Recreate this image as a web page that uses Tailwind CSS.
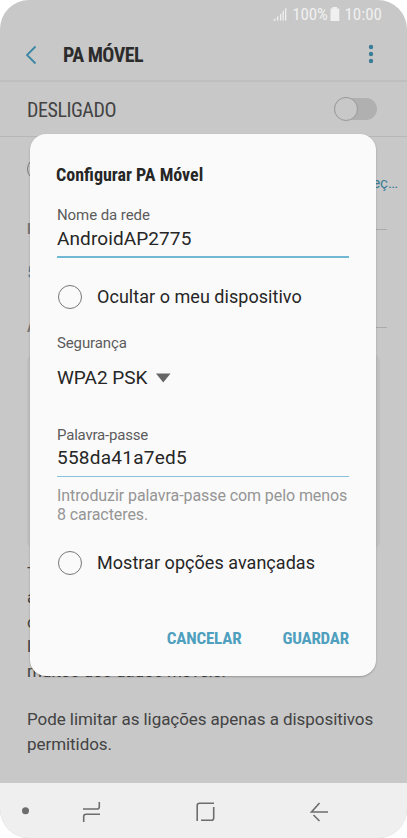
<!DOCTYPE html>
<html lang="pt">
<head>
    <meta charset="UTF-8">
    <meta name="viewport" content="width=device-width, initial-scale=1.0">
    <title>PA Móvel</title>
    <script src="https://cdn.jsdelivr.net/npm/@tailwindcss/browser@4"></script>
</head>
<body class="bg-white font-['Roboto',sans-serif]">
    <div class="relative flex flex-col w-[407px] h-[838px] overflow-hidden rounded-[29px] bg-[#c8c8c8] text-[#434343]">

        <!-- Status bar -->
        <div class="flex items-center justify-end h-7 pr-[25px] text-[#f0f0f0] text-[17px] leading-7 font-['Roboto_Condensed','Roboto',sans-serif] [font-stretch:75%]">
            <svg class="w-[15px] h-[14px] mr-[5px]" viewBox="0 0 15 14" fill="#f0f0f0">
                <path d="M1 13.500L3.500 11V13.500ZM5 10L6.300 8.800V13.500H5ZM8 7.500L9.300 6.200V13.500H8ZM10.500 4.500L11.800 3.200V13.500H10.500ZM13 2L14.300 .7V13.500H13Z"/>
            </svg>
            <span class="tracking-[-0.2px]">100%</span>
            <svg class="w-[10px] h-[14px] ml-[3px] mr-1" viewBox="0 0 10 14" fill="#f0f0f0">
                <path d="M2.500 0H7V1.500H9.300V14H.5V1.500H2.500Z"/>
            </svg>
            <span>10:00</span>
        </div>

        <!-- App bar -->
        <header class="flex items-center h-[54px] pl-6 pr-[31px] border-b-2 border-[#bfbfbf]">
            <svg class="w-[14px] h-5 mt-px" viewBox="0 0 14 20" fill="none" stroke="#3b87a3" stroke-width="1.8">
                <path d="M11.500 1.500L3 10L11.500 18.500"/>
            </svg>
            <h1 class="mt-[2px] ml-[25px] text-[20px] tracking-[-0.5px] font-bold text-[#2c2c2c] font-['Roboto_Condensed','Roboto',sans-serif] [font-stretch:75%]">PA MÓVEL</h1>
            <svg class="w-[10px] h-5 ml-auto" viewBox="0 0 10 20" fill="#3b7d96">
                <circle cx="5" cy="3" r="2.200"/><circle cx="5" cy="10" r="2.200"/><circle cx="5" cy="17" r="2.200"/>
            </svg>
        </header>
        <div class="flex items-center justify-between h-[55px] pl-[27px] pr-[30px] border-b border-[#b7b7b7]">
            <span class="mt-px text-[20px] tracking-[-0.45px] font-['Roboto_Condensed','Roboto',sans-serif] [font-stretch:75%]">DESLIGADO</span>
            <div class="flex items-center w-[43px] h-[22px] rounded-full bg-[#b0b0b0]">
                <div class="size-6 rounded-full border border-[#999] bg-[#c8c8c8]"></div>
            </div>
        </div>

        <!-- Page content -->
        <main class="flex-1 pl-[27px]">
            <div class="flex justify-between h-[91px] pt-5 pr-[9px]">
                <div class="size-6 rounded-full border border-[#777]"></div>
                <span class="pt-4 text-[15px] leading-5 text-[#3b7d96]">Adicionar endereç…</span>
            </div>
            <div class="flex items-center h-[2px] pr-5 text-sm font-bold text-[#777]"><span>Rede</span><i class="flex-1 ml-2 h-px bg-[#aaa]"></i></div>
            <div class="h-[96px] pt-[32px] text-[17px] leading-5 text-[#3b7d96]">5 GHz</div>
            <div class="flex items-center h-[2px] pr-5 text-sm font-bold text-[#777]"><span>Ajuda</span><i class="flex-1 ml-2 h-px bg-[#aaa]"></i></div>
            <div class="w-[353px] h-[195px] mt-[26px] rounded-lg bg-[#c0c0c0]"></div>
            <div class="pt-[11.5px] text-[17px] leading-[24.5px]">
                <p>Tocar para<br>ativar o PA<br>com outros<br>ligados<br>muitos dos dados móveis.</p>
                <p class="pt-[24px] tracking-[-0.06px]">Pode limitar as ligações apenas a dispositivos<br>permitidos.</p>
            </div>
        </main>

        <!-- Navigation bar -->
        <nav class="shrink-0 h-[55px] bg-[#efefef]">
            <svg class="w-full h-full" viewBox="0 0 407 55" fill="none" stroke="#6d6d6d" stroke-width="1.600">
                <circle cx="25.500" cy="27.700" r="3.500" fill="#6d6d6d" stroke="none"/>
                <path d="M83 26H97Q99.300 26 99.300 23.700V19M100 31.200H86Q83.700 31.200 83.700 33.500V39"/>
                <path d="M197.200 38V22.500Q197.200 20.200 199.500 20.200H214M213.700 24V35Q213.700 37.300 211.400 37.300H201"/>
                <path d="M328 29H311.500L319.500 20M313.500 32L319.500 38"/>
            </svg>
        </nav>

        <!-- Dialog -->
        <div class="absolute left-[30px] top-[134px] flex flex-col w-[346px] h-[542px] px-[27px] rounded-[16px] bg-[#fafafa] shadow-[0_1px_2px_rgba(0,0,0,0.25)] text-[#262626]">
            <h2 class="mt-[29px] -ml-px text-[18px] leading-6 font-bold font-['Roboto_Condensed','Roboto',sans-serif] [font-stretch:75%]">Configurar PA Móvel</h2>
            <label class="mt-[18px] text-[15px] tracking-[-0.08px] leading-5 text-[#5c5c5c]">Nome da rede</label>
            <div class="h-[33px] pt-[2px] text-[19px] leading-6 tracking-[0.1px] border-b-2 border-[#70b8d4]">AndroidAP2775</div>
            <div class="flex items-center mt-[27px] pl-px">
                <i class="size-6 rounded-full border border-[#777]"></i>
                <span class="ml-[15px] text-[18px] leading-6 tracking-[0.04px]">Ocultar o meu dispositivo</span>
            </div>
            <label class="mt-[24px] text-[15px] tracking-[-0.12px] leading-5 text-[#5c5c5c]">Segurança</label>
            <div class="flex items-center mt-[13px] text-[19px] leading-6">
                <span>WPA2 PSK</span>
                <svg class="w-[15px] h-[10px] ml-2" viewBox="0 0 15 10" fill="#666"><path d="M0 .5H14.500L7.250 9.500Z"/></svg>
            </div>
            <label class="mt-[35px] text-[15px] tracking-[-0.2px] leading-5 text-[#5c5c5c]">Palavra-passe</label>
            <div class="h-[32px] pt-px text-[19px] leading-6 tracking-[0.25px] border-b border-[#86c2da]">558da41a7ed5</div>
            <p class="mt-[10px] text-[16px] tracking-[-0.08px] leading-[18.5px] text-[#959595]">Introduzir palavra-passe com pelo menos<br>8 caracteres.</p>
            <div class="flex items-center mt-[27px] pl-px">
                <i class="size-6 rounded-full border border-[#777]"></i>
                <span class="ml-[15px] text-[18px] leading-6 tracking-[0.04px]">Mostrar opções avançadas</span>
            </div>
            <div class="flex justify-end gap-[41px] mt-[51px] text-[17px] leading-6 tracking-[-0.2px] font-bold text-[#4f9fbe] font-['Roboto_Condensed','Roboto',sans-serif] [font-stretch:75%]">
                <button>CANCELAR</button>
                <button>GUARDAR</button>
            </div>
        </div>
    </div>
</body>
</html>
